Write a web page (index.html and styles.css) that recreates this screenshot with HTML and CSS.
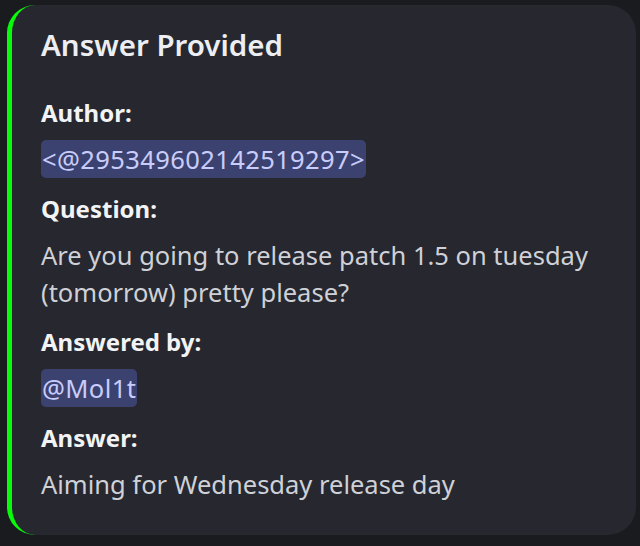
FILE: index.html
```html
<!DOCTYPE html>
<html>
<head>
<meta charset="utf-8">
<link rel="stylesheet" href="styles.css">
</head>
<body>
<div class="embed">
  <div class="title">Answer Provided</div>
  <div class="fields">
    <div class="field">
      <div class="name">Author:</div>
      <div class="value"><span class="mention">&lt;@295349602142519297&gt;</span></div>
    </div>
    <div class="field">
      <div class="name">Question:</div>
      <div class="value">Are you going to release patch 1.5 on tuesday (tomorrow) pretty please?</div>
    </div>
    <div class="field">
      <div class="name">Answered by:</div>
      <div class="value"><span class="mention">@Mol1t</span></div>
    </div>
    <div class="field">
      <div class="name">Answer:</div>
      <div class="value">Aiming for Wednesday release day</div>
    </div>
  </div>
</div>
</body>
</html>
```
FILE: styles.css
```css
html, body {
  margin: 0;
  padding: 0;
  background: #1a1b1f;
  width: 640px;
  height: 546px;
  overflow: hidden;
}
body {
  padding: 5px 4px 11px 7px;
  box-sizing: border-box;
  font-family: "Noto Sans", "Open Sans", sans-serif;
}
.embed {
  background: #26272f;
  border-left: 5px solid #08fb08;
  border-radius: 28px;
  height: 530px;
  box-sizing: border-box;
  padding: 22px 20px 0 29px;
}
.title {
  color: #eceef2;
  font-size: 29.5px;
  font-weight: 600;
  line-height: 36px;
  margin-bottom: 32px;
}
.fields {
  display: flex;
  flex-direction: column;
  gap: 13px;
}
.name {
  color: #f2f3f5;
  font-size: 24px;
  font-weight: 700;
  line-height: 36px;
  margin-bottom: 10px;
}
.value {
  color: #cfd1d7;
  font-size: 25.5px;
  line-height: 37px;
}
.mention {
  background: #3c4270;
  color: #c9cdfb;
  border-radius: 5px;
  padding: 2px 1px;
  letter-spacing: 0.4px;
}
```
